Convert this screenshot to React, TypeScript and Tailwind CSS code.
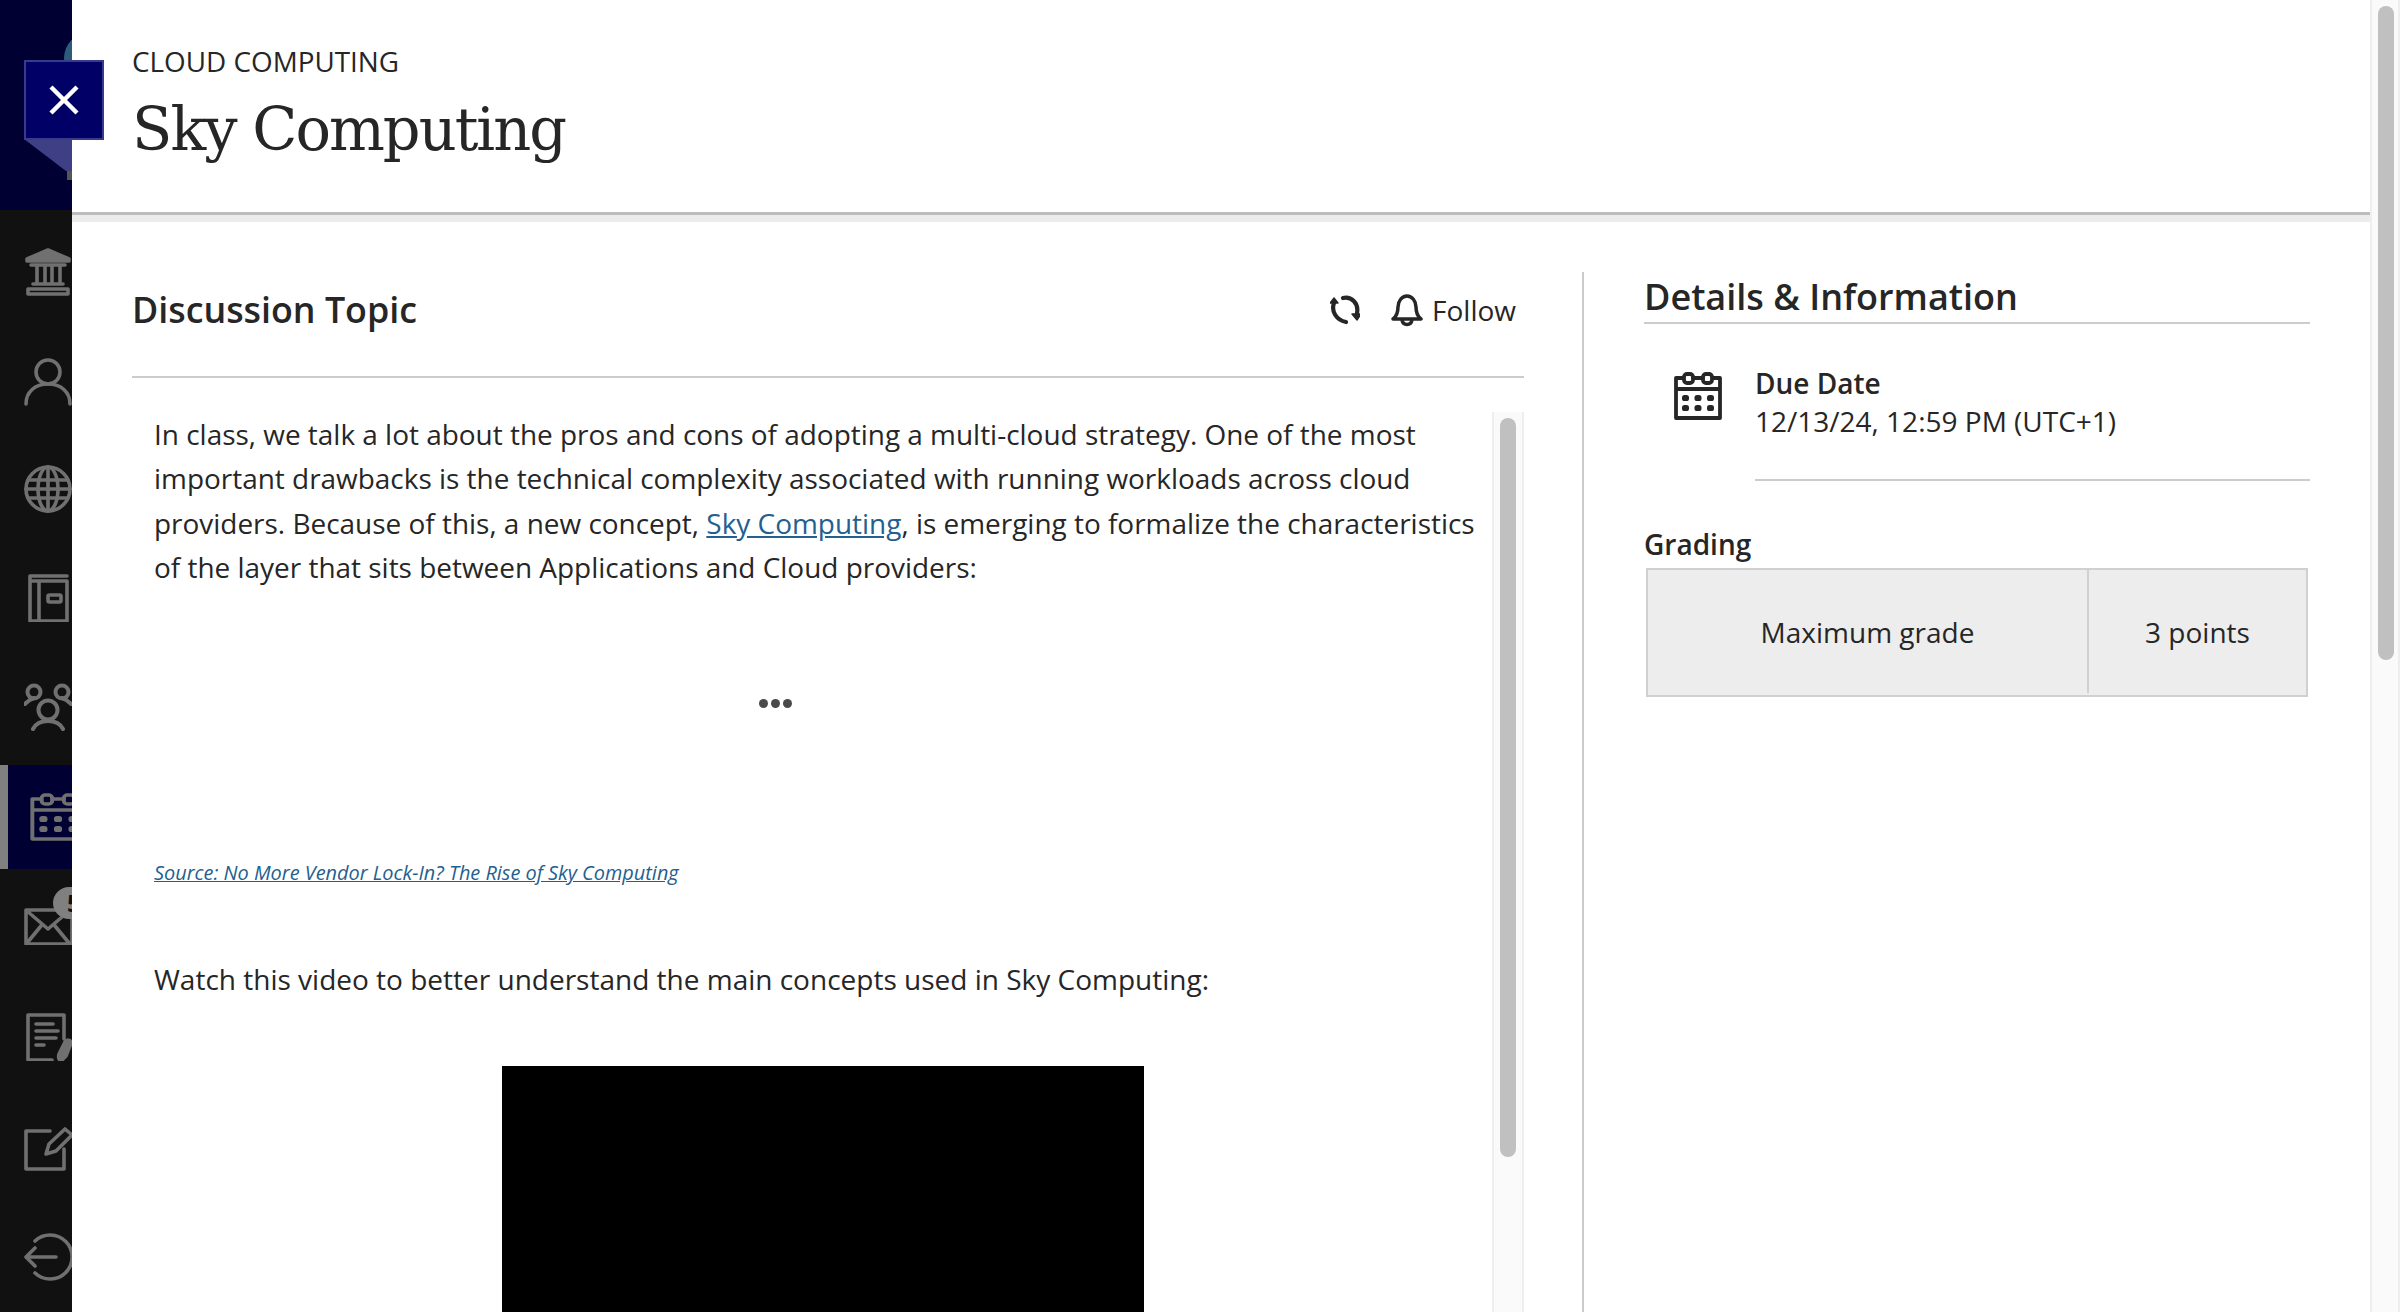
const sans = { fontFamily: '"Open Sans", sans-serif' };

function NavIcon({ className, children }: { className: string; children: React.ReactNode }) {
  return (
    <svg
      viewBox="0 0 72 48"
      className={`block h-[48px] w-[72px] shrink-0 text-[#707070] ${className}`}
      fill="none"
      stroke="currentColor"
      strokeWidth="3.6"
      strokeLinecap="round"
      strokeLinejoin="round"
    >
      {children}
    </svg>
  );
}

function CalendarGlyph() {
  return (
    <>
      <path d="M9 6H2v40h44V6h-7M19 6h10M2 17h44" />
      <rect x="10" y="2" width="9" height="9" rx="3" />
      <rect x="29" y="2" width="9" height="9" rx="3" />
      <g fill="currentColor" stroke="none">
        <rect x="8" y="23" width="7" height="6" rx="2.6" />
        <rect x="20.5" y="23" width="7" height="6" rx="2.6" />
        <rect x="33" y="23" width="7" height="6" rx="2.6" />
        <rect x="8" y="33" width="7" height="6" rx="2.6" />
        <rect x="20.5" y="33" width="7" height="6" rx="2.6" />
        <rect x="33" y="33" width="7" height="6" rx="2.6" />
      </g>
    </>
  );
}

function Sidebar() {
  return (
    <aside className="flex h-full w-[72px] shrink-0 flex-col overflow-hidden bg-[#111111]">
      <div className="relative h-[210px] shrink-0 bg-[#000033]">
        <div className="absolute left-[64px] top-[33px] h-[50px] w-[50px] rounded-full bg-[#2b5c7c]" />
        <div className="absolute left-[67px] top-[170px] h-[10px] w-[5px] bg-[#555555]" />
      </div>

      <NavIcon className="ml-[24px] mt-[38px]">
        <path d="M24 2 3 11v2h42v-2z" fill="currentColor" />
        <path d="M7 17h34M9 36h30M4 41h40v5H4zM13 18v17M21 18v17M28 18v17M36 18v17" />
      </NavIcon>
      <NavIcon className="ml-[24px] mt-[62px]">
        <circle cx="24" cy="14" r="12" />
        <path d="M2 46c0-12 9-20 22-20s22 8 22 20" />
      </NavIcon>
      <NavIcon className="ml-[24px] mt-[59px]">
        <circle cx="24" cy="24" r="22" />
        <ellipse cx="24" cy="24" rx="10" ry="22" />
        <path d="M24 2v44M4 15h40M2 24h44M4 33h40" />
      </NavIcon>
      <NavIcon className="ml-[22px] mt-[61px]">
        <path d="M45 2H8v45h37V7H8M17 7v40" />
        <rect x="26" y="21" width="13" height="7" rx="1.5" />
      </NavIcon>
      <NavIcon className="ml-[24px] mt-[61px]">
        <circle cx="10" cy="9" r="6.5" strokeWidth="4" />
        <circle cx="38" cy="9" r="6.5" strokeWidth="4" />
        <circle cx="24" cy="27" r="9.5" strokeWidth="4" />
        <path d="M1 21c3-4 6-5 9-6M47 21c-3-4-6-5-9-6M9 46c3-6 8-8 15-8s12 2 15 8" strokeWidth="4" />
      </NavIcon>

      <div className="mt-[34px] flex h-[104px] shrink-0 bg-[#000033]">
        <div className="h-full w-[8px] shrink-0 bg-[#808080]" />
        <svg
          viewBox="0 0 48 48"
          preserveAspectRatio="none"
          className="ml-[22px] mt-[28px] h-[48px] w-[56px] shrink-0 text-[#707070]"
          fill="none"
          stroke="currentColor"
          strokeWidth="3.4"
          strokeLinecap="round"
          strokeLinejoin="round"
        >
          <CalendarGlyph />
        </svg>
      </div>

      <div className="relative mt-[28px] h-[48px] shrink-0">
        <NavIcon className="ml-[24px]">
          <path d="M33 13H2v34h46V13M3 14l21 18 21-18M3 46l14-17M45 46 31 29" />
        </NavIcon>
        <div
          style={sans}
          className="absolute left-[53px] top-[-10px] flex h-[32px] w-[40px] items-center rounded-full bg-[#808080] pl-[14px] text-[24px] font-bold leading-none text-[#111111]"
        >
          5
        </div>
      </div>

      <NavIcon className="ml-[26px] mt-[68px]">
        <path d="M38 26V2H2v45h24M10 11h17M10 18h22M10 25h20M10 32h8" />
        <path d="M36 47c-3 1-4-2-3-6l6-12c2-3 6-2 6 1l-5 13z" fill="currentColor" />
      </NavIcon>
      <NavIcon className="ml-[24px] mt-[66px]">
        <path d="M26 4H2v38h38V22" />
        <path d="M22 27l3-10L41 2l7 6-16 16z" />
      </NavIcon>
      <NavIcon className="ml-[24px] mt-[58px]">
        <path d="M11 8a22 22 0 1 1 0 32M2 24h30M11 15l-9 9 9 9" />
      </NavIcon>
    </aside>
  );
}

function Scrollbar({ className, thumb }: { className: string; thumb: string }) {
  return (
    <div className={`shrink-0 border-x-2 border-[#eeeeee] bg-[#fafafa] px-[6px] ${className}`}>
      <div className={`w-[16px] rounded-full bg-[#c0c0c0] ${thumb}`} />
    </div>
  );
}

export default function App() {
  return (
    <div style={sans} className="relative flex h-[1312px] w-[2400px] overflow-hidden bg-white text-[#262626]">
      <Sidebar />

      {/* close tab sits over the sidebar and the panel */}
      <div className="absolute left-[24px] top-[60px] z-10 flex h-[80px] w-[80px] items-center justify-center border-2 border-[#3a3a8c] bg-[#000066]">
        <svg viewBox="0 0 32 32" className="h-[32px] w-[32px]" stroke="white" strokeWidth="4.4">
          <path d="M3 3l26 26M29 3 3 29" />
        </svg>
      </div>
      <svg viewBox="0 0 48 32" className="absolute left-[24px] top-[139px] h-[32px] w-[48px]">
        <path d="M0 0h48v32H42z" fill="#3f3f86" />
      </svg>

      <div className="flex min-w-0 flex-1 flex-col">
        <header className="h-[215px] shrink-0 border-b-[3px] border-[#bdbdbd] pl-[60px] pt-[41px]">
          <div className="text-[27.85px] leading-[40px]">CLOUD COMPUTING</div>
          <h1
            className="mt-[11px] text-[59px] leading-[76px] tracking-[-2px]"
            style={{ fontFamily: '"DejaVu Serif", serif' }}
          >
            Sky Computing
          </h1>
        </header>
        <div className="h-[7px] shrink-0 bg-[#ececec]" />

        <div className="flex min-h-0 flex-1 pl-[60px]">
          <section className="flex w-[1392px] shrink-0 flex-col pt-[59px]">
            <div className="flex h-[97px] shrink-0 items-start justify-between border-b-2 border-[#cccccc]">
              <h2 className="text-[35.8px] font-semibold leading-[56px]">Discussion Topic</h2>
              <div className="mr-[8px] mt-[12px] flex items-center">
                <svg viewBox="0 0 30 30" className="h-[30px] w-[30px]" fill="none" stroke="#262626" strokeWidth="4.2" strokeLinecap="round">
                  <path d="M4 8c-3 8 2 17 12 19" />
                  <path d="M13 3c8-2 16 5 14 15" />
                  <path d="M0 8l4-5 4 5zM22 19h9l-4 6z" fill="#262626" strokeWidth="1.4" strokeLinejoin="round" />
                </svg>
                <svg viewBox="0 0 32 34" className="ml-[31px] h-[34px] w-[32px]" fill="none" stroke="#262626" strokeWidth="3.5" strokeLinejoin="round">
                  <path d="M2 26c4-3 5-7 5-12 0-6 4-11 9-11s9 5 9 11c0 5 1 9 5 12z" />
                  <path d="M11 27c1 6 9 6 10 0" />
                </svg>
                <span className="ml-[9px] text-[28px] leading-[34px]">Follow</span>
              </div>
            </div>

            <div className="mt-[34px] flex min-h-0 flex-1">
              <div className="w-[1360px] shrink-0 pl-[22px] text-[27.95px] leading-[44.4px]">
                <p className="w-[1330px]">
                  In class, we talk a lot about the pros and cons of adopting a multi-cloud strategy. One of the most
                  important drawbacks is the technical complexity associated with running workloads across cloud
                  providers. Because of this, a new concept,{" "}
                  <a className="text-[#24608f] underline">Sky Computing</a>, is emerging to formalize the characteristics
                  of the layer that sits between Applications and Cloud providers:
                </p>
                <div className="mt-[92px] flex h-[44px] w-[1242px] items-center justify-center">
                  <div className="flex gap-[3px]">
                    <span className="h-[9px] w-[9px] rounded-full bg-[#4a4a4a]" />
                    <span className="h-[9px] w-[9px] rounded-full bg-[#4a4a4a]" />
                    <span className="h-[9px] w-[9px] rounded-full bg-[#4a4a4a]" />
                  </div>
                </div>
                <a className="mt-[132px] block text-[19.9px] italic leading-[30px] text-[#24608f] underline">
                  Source: No More Vendor Lock-In? The Rise of Sky Computing
                </a>
                <p className="mt-[69px] text-[28px]">Watch this video to better understand the main concepts used in Sky Computing:</p>
                <div className="ml-[348px] mt-[65px] h-[300px] w-[642px] bg-black" />
              </div>
              <Scrollbar className="h-[960px] pt-[6px]" thumb="h-[739px]" />
            </div>
          </section>

          <div className="ml-[58px] mt-[50px] w-[2px] shrink-0 bg-[#cccccc]" />

          <section className="ml-[60px] mt-[50px] w-[666px] shrink-0">
            <h2 className="h-[52px] border-b-2 border-[#cccccc] text-[36px] font-semibold leading-[49px]">
              Details &amp; Information
            </h2>
            <div className="mt-[48px] flex">
              <svg
                viewBox="0 0 48 48"
                className="ml-[30px] h-[48px] w-[48px] shrink-0 text-[#262626]"
                fill="none"
                stroke="currentColor"
                strokeWidth="3.8"
                strokeLinecap="round"
                strokeLinejoin="round"
              >
                <CalendarGlyph />
              </svg>
              <div className="ml-[33px] -mt-[8px] flex-1">
                <div className="text-[28px] font-semibold leading-[38px]">Due Date</div>
                <div className="text-[28px] leading-[38px]">12/13/24, 12:59 PM (UTC+1)</div>
                <div className="mt-[39px] h-[2px] bg-[#cccccc]" />
              </div>
            </div>
            <div className="mt-[43px] text-[28px] font-semibold leading-[40px]">Grading</div>
            <div className="ml-[2px] mt-[4px] flex h-[129px] w-[662px] border-2 border-[#d0d0d0] bg-[#ededed] pb-[2px] text-[28px]">
              <div className="flex w-[441px] items-center justify-center border-r-2 border-[#d0d0d0]">Maximum grade</div>
              <div className="flex flex-1 items-center justify-center">3 points</div>
            </div>
          </section>
        </div>
      </div>

      <Scrollbar className="h-full w-[30px] pt-[6px]" thumb="h-[654px]" />
    </div>
  );
}
